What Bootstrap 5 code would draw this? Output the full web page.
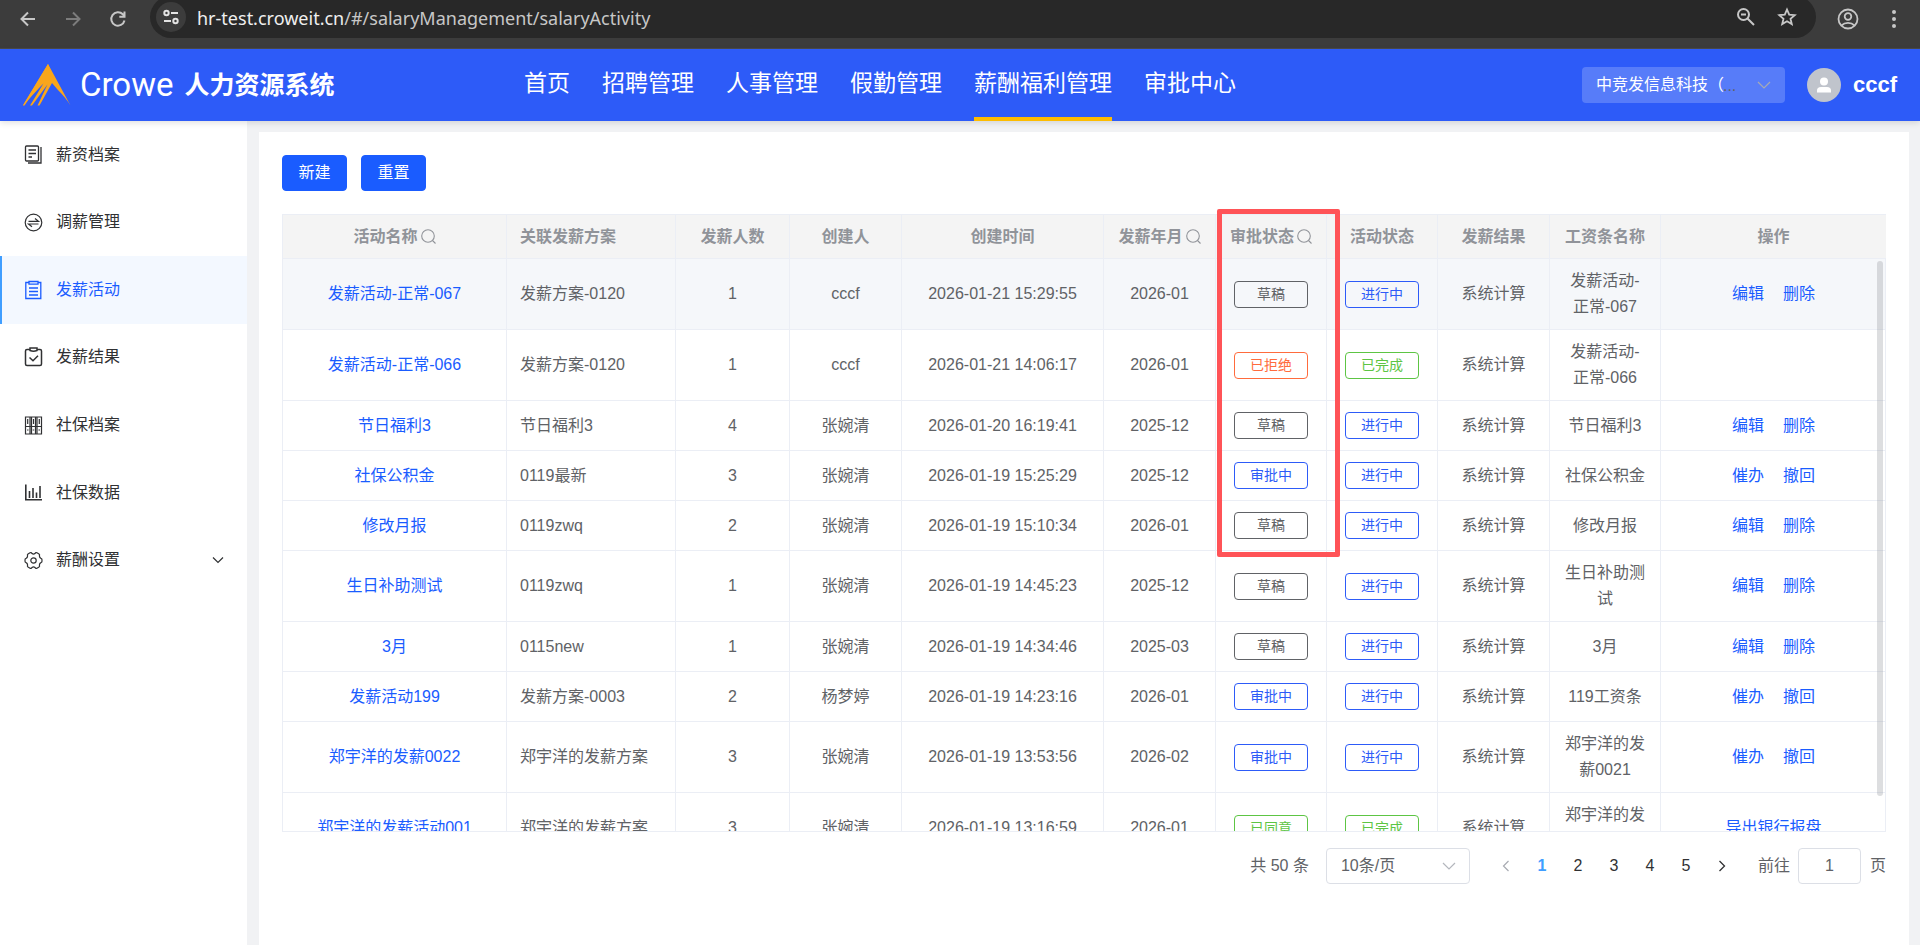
<!DOCTYPE html>
<html lang="zh-CN">
<head>
<meta charset="utf-8">
<meta name="viewport" content="width=device-width, initial-scale=1">
<title>人力资源系统 - 发薪活动</title>
<link rel="stylesheet" href="https://cdn.jsdelivr.net/npm/bootstrap@5.3.0/dist/css/bootstrap.min.css">
<script src="https://cdn.jsdelivr.net/npm/bootstrap@5.3.0/dist/js/bootstrap.bundle.min.js"></script>
<style>
  :root { --brand: #1a5cff; --bar: #2d5bf8; --ink: #606266; --line: #ebeef5; }
  body { font-family: "Liberation Sans", "Noto Sans CJK SC", sans-serif; font-size: 16px; line-height: 26px; color: var(--ink); background: #f1f2f4; min-height: 100vh; overflow: hidden; }
  svg { display: block; flex: none; }
  a { text-decoration: none; color: var(--brand); }

  /* browser toolbar */
  .chrome-bar { height: 49px; background: #3c3c3c; border-bottom: 1px solid #4a4a4a; color: #c7c7c7; padding: 0 16px 11px 17px; }
  .chrome-bar button, .icon-btn { background: none; border: 0; padding: 0; color: inherit; }
  .chrome-nav { width: 133px; gap: 23px; }
  .url-pill { background: #282828; height: 42px; margin-top: -4px; border-radius: 21px; padding: 1px 18px 0 6px; font: 18px/36px "Noto Sans", sans-serif; }
  .site-info { width: 30px; height: 30px; background: #3c3c3c !important; border-radius: 50%; }
  .url-text { margin-left: 11px; padding-top: 2px; }
  .url-host { color: #efefef; }

  /* application header */
  .app-head { height: 72px; background: var(--bar); color: #fff; padding: 0 22px; position: relative; box-shadow: 0 2px 6px rgba(0,0,0,.12); z-index: 2; }
  .brand-area { width: 502px; }
  .brand-word { font: 400 33px/40px Roboto, sans-serif; margin-left: 8px; }
  .brand-title { font-size: 25px; font-weight: 700; line-height: 36px; margin-left: 11px; }
  .top-menu { gap: 32px; height: 100%; }
  .top-menu a { color: #fff; font-size: 23px; line-height: 68px; border-bottom: 4px solid transparent; height: 72px; white-space: nowrap; }
  .top-menu a.on { border-color: #fdbc00; }
  .company { width: 203px; position: relative; }
  .company select { width: 100%; height: 36px; border: 0; border-radius: 4px; background: #577cf9; color: #fff; padding: 0 14px; appearance: none; line-height: 36px; }
  .company .more { position: absolute; left: 141px; top: 6px; color: #606266; }
  .company svg { position: absolute; right: 14px; top: 11px; color: #a8abb2; }
  .avatar { width: 34px; height: 34px; border-radius: 50%; background: #c0c4cc; margin: 0 12px 0 22px; }
  .user-name { font-size: 22px; font-weight: 700; color: #fff; margin-right: 1px; }

  /* side menu */
  .side { width: 247px; background: #fff; flex: none; }
  .side-list { display: grid; grid-template-rows: repeat(7, 1fr); height: 473px; margin: 0; padding: 0; list-style: none; }
  .side-list a { height: 100%; padding: 0 23px 0 22px; border-left: 2px solid transparent; color: #303133; gap: 13px; }
  .side-list a.on { background: #f3f8ff; border-color: #409eff; color: var(--brand); }

  .page-main { min-width: 0; padding: 11px 11px 0 12px; }
  .sheet { background: #fff; padding: 23px; flex: 1; }
  .tools { gap: 14px; }
  .btn-main { --bs-btn-bg: #1a5cff; --bs-btn-border-color: #1a5cff; --bs-btn-color: #fff; --bs-btn-hover-bg: #467cff; --bs-btn-hover-color: #fff; --bs-btn-font-size: 16px; --bs-btn-border-radius: 4px; --bs-btn-padding-y: 0; --bs-btn-padding-x: 0; width: 65px; height: 36px; }

  /* data grid */
  .grid-wrap { position: relative; margin-top: 23px; border: 1px solid var(--line); }
  .grid-body { position: relative; height: 572px; overflow: hidden; }
  .pay-grid { width: 100%; table-layout: fixed; border-collapse: separate; border-spacing: 0; text-align: center; }
  .pay-grid td, .pay-grid th { padding: 9px 13px; border-right: 1px solid var(--line); border-bottom: 1px solid var(--line); vertical-align: middle; }
  .pay-grid td { height: 50px; padding-top: 0; padding-bottom: 0; }
  .pay-grid tr.tall td { height: 71px; }
  .pay-grid th { height: 44px; background: #f4f4f4; color: #909399; font-weight: 700; white-space: nowrap; padding: 0 12px; }
  .pay-grid th:last-child, .pay-grid td:last-child { border-right: 0; }
  .pay-grid th:nth-child(2), .pay-grid td:nth-child(2) { text-align: left; padding-left: 13px; }
  .pay-grid tr.hovered td { background: #f5f7fa; }
  .pay-grid th svg { display: inline-block; margin-left: 3px; vertical-align: -2px; }
  .state { display: block; width: 74px; height: 27px; margin: 0 auto; border: 1px solid; border-radius: 4px; font-size: 14px; line-height: 24px; }
  .pay-grid td:nth-child(7), .pay-grid td:nth-child(8) { padding-left: 0; padding-right: 0; }
  .st-draft { color: #606266; } .st-run { color: #2d5bf8; } .st-no { color: #ff6b3d; } .st-ok { color: #5dc544; }
  .ops a + a { margin-left: 19px; }
  .thumb { position: absolute; right: 2px; top: 2px; width: 6px; height: 535px; border-radius: 3px; background: rgba(144,147,153,.3); }
  .callout { position: absolute; left: 58.3%; top: -6px; width: 123px; height: 348px; border: 5px solid #ff5357; border-radius: 2px; pointer-events: none; }

  /* pager */
  .pager { padding-top: 16px; }
  .pager select, .pager input { height: 36px; border: 1px solid #dcdfe6; border-radius: 4px; color: var(--ink); background: #fff; }
  .size-pick { position: relative; width: 144px; margin: 0 18px 0 17px; }
  .size-pick select { width: 100%; padding: 0 14px; appearance: none; }
  .size-pick svg { position: absolute; right: 14px; top: 11px; color: #b4b7bd; }
  .pager .icon-btn { width: 36px; height: 36px; color: #303133; }
  .pager .icon-btn.on { color: #409eff; font-weight: 700; }
  .pager label { margin-left: 18px; }
  .pager input { width: 63px; text-align: center; padding: 0; margin: 0 9px 0 8px; }
</style>
</head>
<body class="d-flex flex-column">

<div class="chrome-bar d-flex align-items-center">
  <div class="chrome-nav d-flex align-items-center">
    <button aria-label="后退"><svg width="22" height="22" viewBox="0 0 22 22" fill="none" stroke="currentColor" stroke-width="2"><path d="M18 11H5M11 4.500 4.500 11l6.500 6.500"/></svg></button>
    <button aria-label="前进"><svg width="22" height="22" viewBox="0 0 22 22" fill="none" stroke="#7c7c7c" stroke-width="2"><path d="M4 11h13M11 4.500 17.500 11 11 17.500"/></svg></button>
    <button aria-label="刷新"><svg width="22" height="22" viewBox="0 0 22 22" fill="none" stroke="currentColor" stroke-width="2"><path d="M17.500 12.500a6.700 6.700 0 1 1-1.700-6.200L18 8.500M17.500 3.500v5.200h-5.200"/></svg></button>
  </div>
  <div class="url-pill d-flex align-items-center flex-grow-1">
    <button class="site-info d-flex align-items-center justify-content-center" aria-label="网站信息"><svg width="18" height="18" viewBox="0 0 18 18" fill="none" stroke="#e3e3e3" stroke-width="2"><circle cx="4.500" cy="5" r="2.200"/><path d="M9 5h7M2 13h7"/><circle cx="13.500" cy="13" r="2.200"/></svg></button>
    <div class="url-text flex-grow-1"><span class="url-host">hr-test.croweit.cn</span>/#/salaryManagement/salaryActivity</div>
    <button class="me-3 pe-1" aria-label="缩放"><svg width="20" height="20" viewBox="0 0 20 20" fill="none" stroke="currentColor" stroke-width="2"><circle cx="7.500" cy="7.500" r="5.500"/><path d="M5 7.500h5M11.500 11.500 18 18"/></svg></button>
    <button aria-label="收藏"><svg width="22" height="22" viewBox="0 0 22 22" fill="none" stroke="currentColor" stroke-width="1.800"><path d="m11 3.500 2.200 5.100 5.500.5-4.200 3.600 1.300 5.400-4.800-2.900-4.800 2.900 1.300-5.400-4.200-3.600 5.500-.5z"/></svg></button>
  </div>
  <button class="ms-3 ps-1" aria-label="用户"><svg width="24" height="24" viewBox="0 0 24 24" fill="none" stroke="currentColor" stroke-width="1.800"><circle cx="12" cy="12" r="9.500"/><circle cx="12" cy="9.500" r="3.300"/><path d="M5.500 18.500c3.500-3.500 9.500-3.500 13 0"/></svg></button>
  <button class="ms-4" aria-label="菜单"><svg width="20" height="22" viewBox="0 0 20 22" fill="currentColor"><circle cx="10" cy="4" r="2"/><circle cx="10" cy="11" r="2"/><circle cx="10" cy="18" r="2"/></svg></button>
</div>

<header class="app-head d-flex align-items-center">
  <div class="brand-area d-flex align-items-center">
    <svg width="50" height="44" viewBox="0 0 50 44" fill="#f9a61c"><path d="M26 1 48.500 42.500Q44 35 35.500 26.500L30 20 17.500 42.500H15.500L25.500 21.500 10 42.500H8L21.500 20.500Q12 28 2.500 42.500H.8z"/><path d="M26 1 36 26 29 14 26 18 29 12 1 42.500z"/></svg>
    <span class="brand-word">Crowe</span>
    <span class="brand-title">人力资源系统</span>
  </div>
  <nav class="top-menu d-flex">
    <a href="#">首页</a><a href="#">招聘管理</a><a href="#">人事管理</a><a href="#">假勤管理</a><a href="#" class="on">薪酬福利管理</a><a href="#">审批中心</a>
  </nav>
  <div class="company ms-auto">
    <select aria-label="公司"><option>中竞发信息科技（</option></select>
    <span class="more" aria-hidden="true">...</span>
    <svg width="14" height="14" viewBox="0 0 14 14" fill="none" stroke="currentColor" stroke-width="1.200"><path d="m1 4 6 6 6-6"/></svg>
  </div>
  <span class="avatar d-flex align-items-center justify-content-center"><svg width="16" height="16" viewBox="0 0 16 16" fill="#fff"><circle cx="8" cy="4.500" r="4"/><path d="M1 15.500v-2Q1 10 5 10h6q4 0 4 3.500v2z"/></svg></span>
  <span class="user-name">cccf</span>
</header>

<div class="d-flex flex-grow-1">
  <aside class="side">
    <ul class="side-list">
      <li><a href="#" class="d-flex align-items-center"><svg width="19" height="19" viewBox="0 0 19 19" fill="none" stroke="currentColor" stroke-width="1.300"><rect x="1.500" y="1" width="13" height="15" rx="1"/><path d="M17 2v16H4M4.500 5h7.500M4.500 8.500h7.500M4.500 12H8" /></svg>薪资档案</a></li>
      <li><a href="#" class="d-flex align-items-center"><svg width="19" height="19" viewBox="0 0 19 19" fill="none" stroke="currentColor" stroke-width="1.200"><circle cx="9.500" cy="9.500" r="8.300"/><path d="M4.500 8.300h10L11 5.500M14.500 11h-10L8 13.800"/></svg>调薪管理</a></li>
      <li><a href="#" class="on d-flex align-items-center"><svg width="19" height="20" viewBox="0 0 19 20" fill="none" stroke="currentColor" stroke-width="1.300"><path d="M5 2.500H1.800v16h15v-16H14M5 1.500h9v2.700H5zM5 8h9M5 11.500h9M5 15h9"/></svg>发薪活动</a></li>
      <li><a href="#" class="d-flex align-items-center"><svg width="19" height="20" viewBox="0 0 19 20" fill="none" stroke="currentColor" stroke-width="1.500"><path d="M6 2.500H3Q1.500 2.500 1.500 4v13q0 1.500 1.500 1.500h13q1.500 0 1.500-1.500V4q0-1.500-1.500-1.500h-3M6 1h7v2.500Q9.500 5 6 3.500zM5.500 10.500l3.500 3.300 5-5"/></svg>发薪结果</a></li>
      <li><a href="#" class="d-flex align-items-center"><svg width="19" height="19" viewBox="0 0 19 19" fill="none" stroke="currentColor" stroke-width="1.200"><path d="M1.500 1h16v17h-16zM6 1v17M7.500 1v17M11.500 1v17M13 1v17M1.500 10.500h16M3.700 3v5M9.500 3v5M15.300 3v5M3 14h1.500M8.700 14h1.500M14.500 14H16"/></svg>社保档案</a></li>
      <li><a href="#" class="d-flex align-items-center"><svg width="19" height="19" viewBox="0 0 19 19" fill="none" stroke="currentColor" stroke-width="1.600"><path d="M1.800 1.500v15.200H18M5.500 15V8M9 15V5M12.500 15V9.500M16 15V3"/></svg>社保数据</a></li>
      <li><a href="#" class="d-flex align-items-center"><svg width="19" height="19" viewBox="0 0 19 19" fill="none" stroke="currentColor" stroke-width="1.200"><path d="M6 1.800q1.500-.5 2 .7 1.500 1.300 3 0 .5-1.200 2-.7l2 1.200q1 .8.400 1.900.1 2.100 1.600 2.500Q18.300 7.700 18 9.500q.3 1.800-1 2.100-1.500.4-1.600 2.500.6 1.100-.4 1.900l-2 1.200q-1.500.5-2-.7-1.500-1.300-3 0-.5 1.200-2 .7L4 16q-1-.8-.4-1.900-.1-2.100-1.600-2.500Q.7 11.300 1 9.500.7 7.700 2 7.400q1.500-.4 1.600-2.500Q3 3.800 4 3z"/><circle cx="9.500" cy="9.500" r="2.700"/></svg>薪酬设置<svg class="ms-auto" width="12" height="12" viewBox="0 0 12 12" fill="none" stroke="currentColor" stroke-width="1.200"><path d="m1 3.500 5 5 5-5"/></svg></a></li>
    </ul>
  </aside>

  <main class="page-main flex-grow-1 d-flex flex-column">
    <section class="sheet">
      <div class="tools d-flex">
        <button type="button" class="btn btn-main">新建</button>
        <button type="button" class="btn btn-main">重置</button>
      </div>

      <div class="grid-wrap">
        <table class="pay-grid">
          <colgroup><col style="width:224px"><col style="width:169px"><col style="width:114px"><col style="width:112px"><col style="width:202px"><col style="width:112px"><col style="width:111px"><col style="width:111px"><col style="width:112px"><col style="width:111px"><col style="width:225px"></colgroup>
          <thead><tr>
            <th>活动名称<svg width="15" height="15" viewBox="0 0 15 15" fill="none" stroke="currentColor" stroke-width="1.100"><circle cx="7" cy="7" r="6.300"/><path d="m11.500 11.500 3 3"/></svg></th>
            <th>关联发薪方案</th><th>发薪人数</th><th>创建人</th><th>创建时间</th>
            <th>发薪年月<svg width="15" height="15" viewBox="0 0 15 15" fill="none" stroke="currentColor" stroke-width="1.100"><circle cx="7" cy="7" r="6.300"/><path d="m11.500 11.500 3 3"/></svg></th>
            <th>审批状态<svg width="15" height="15" viewBox="0 0 15 15" fill="none" stroke="currentColor" stroke-width="1.100"><circle cx="7" cy="7" r="6.300"/><path d="m11.500 11.500 3 3"/></svg></th>
            <th>活动状态</th><th>发薪结果</th><th>工资条名称</th><th>操作</th>
          </tr></thead>
        </table>
        <div class="grid-body">
          <table class="pay-grid">
            <colgroup><col style="width:224px"><col style="width:169px"><col style="width:114px"><col style="width:112px"><col style="width:202px"><col style="width:112px"><col style="width:111px"><col style="width:111px"><col style="width:112px"><col style="width:111px"><col style="width:225px"></colgroup>
            <tbody>
              <tr class="tall hovered"><td><a href="#">发薪活动-正常-067</a></td><td>发薪方案-0120</td><td>1</td><td>cccf</td><td>2026-01-21 15:29:55</td><td>2026-01</td><td><span class="state st-draft">草稿</span></td><td><span class="state st-run">进行中</span></td><td>系统计算</td><td>发薪活动-<br>正常-067</td><td class="ops"><a href="#">编辑</a><a href="#">删除</a></td></tr>
              <tr class="tall"><td><a href="#">发薪活动-正常-066</a></td><td>发薪方案-0120</td><td>1</td><td>cccf</td><td>2026-01-21 14:06:17</td><td>2026-01</td><td><span class="state st-no">已拒绝</span></td><td><span class="state st-ok">已完成</span></td><td>系统计算</td><td>发薪活动-<br>正常-066</td><td class="ops"></td></tr>
              <tr><td><a href="#">节日福利3</a></td><td>节日福利3</td><td>4</td><td>张婉清</td><td>2026-01-20 16:19:41</td><td>2025-12</td><td><span class="state st-draft">草稿</span></td><td><span class="state st-run">进行中</span></td><td>系统计算</td><td>节日福利3</td><td class="ops"><a href="#">编辑</a><a href="#">删除</a></td></tr>
              <tr><td><a href="#">社保公积金</a></td><td>0119最新</td><td>3</td><td>张婉清</td><td>2026-01-19 15:25:29</td><td>2025-12</td><td><span class="state st-run">审批中</span></td><td><span class="state st-run">进行中</span></td><td>系统计算</td><td>社保公积金</td><td class="ops"><a href="#">催办</a><a href="#">撤回</a></td></tr>
              <tr><td><a href="#">修改月报</a></td><td>0119zwq</td><td>2</td><td>张婉清</td><td>2026-01-19 15:10:34</td><td>2026-01</td><td><span class="state st-draft">草稿</span></td><td><span class="state st-run">进行中</span></td><td>系统计算</td><td>修改月报</td><td class="ops"><a href="#">编辑</a><a href="#">删除</a></td></tr>
              <tr class="tall"><td><a href="#">生日补助测试</a></td><td>0119zwq</td><td>1</td><td>张婉清</td><td>2026-01-19 14:45:23</td><td>2025-12</td><td><span class="state st-draft">草稿</span></td><td><span class="state st-run">进行中</span></td><td>系统计算</td><td>生日补助测试</td><td class="ops"><a href="#">编辑</a><a href="#">删除</a></td></tr>
              <tr><td><a href="#">3月</a></td><td>0115new</td><td>1</td><td>张婉清</td><td>2026-01-19 14:34:46</td><td>2025-03</td><td><span class="state st-draft">草稿</span></td><td><span class="state st-run">进行中</span></td><td>系统计算</td><td>3月</td><td class="ops"><a href="#">编辑</a><a href="#">删除</a></td></tr>
              <tr><td><a href="#">发薪活动199</a></td><td>发薪方案-0003</td><td>2</td><td>杨梦婷</td><td>2026-01-19 14:23:16</td><td>2026-01</td><td><span class="state st-run">审批中</span></td><td><span class="state st-run">进行中</span></td><td>系统计算</td><td>119工资条</td><td class="ops"><a href="#">催办</a><a href="#">撤回</a></td></tr>
              <tr class="tall"><td><a href="#">郑宇洋的发薪0022</a></td><td>郑宇洋的发薪方案</td><td>3</td><td>张婉清</td><td>2026-01-19 13:53:56</td><td>2026-02</td><td><span class="state st-run">审批中</span></td><td><span class="state st-run">进行中</span></td><td>系统计算</td><td>郑宇洋的发薪0021</td><td class="ops"><a href="#">催办</a><a href="#">撤回</a></td></tr>
              <tr class="tall"><td><a href="#">郑宇洋的发薪活动001</a></td><td>郑宇洋的发薪方案</td><td>3</td><td>张婉清</td><td>2026-01-19 13:16:59</td><td>2026-01</td><td><span class="state st-ok">已同意</span></td><td><span class="state st-ok">已完成</span></td><td>系统计算</td><td>郑宇洋的发薪001</td><td class="ops"><a href="#">导出银行报盘</a></td></tr>
            </tbody>
          </table>
          <div class="thumb"></div>
        </div>
        <div class="callout"></div>
      </div>

      <div class="pager d-flex align-items-center justify-content-end">
        <span>共 50 条</span>
        <div class="size-pick">
          <select aria-label="每页条数"><option>10条/页</option></select>
          <svg width="14" height="14" viewBox="0 0 14 14" fill="none" stroke="currentColor" stroke-width="1.200"><path d="m1 4 6 6 6-6"/></svg>
        </div>
        <button class="icon-btn d-flex align-items-center justify-content-center" aria-label="上一页"><svg width="12" height="12" viewBox="0 0 12 12" fill="none" stroke="#a8abb2" stroke-width="1.200"><path d="M8.500 1 3.500 6l5 5"/></svg></button>
        <button class="icon-btn on">1</button><button class="icon-btn">2</button><button class="icon-btn">3</button><button class="icon-btn">4</button><button class="icon-btn">5</button>
        <button class="icon-btn d-flex align-items-center justify-content-center" aria-label="下一页"><svg width="12" height="12" viewBox="0 0 12 12" fill="none" stroke="currentColor" stroke-width="1.300"><path d="m3.500 1 5 5-5 5"/></svg></button>
        <label for="jump">前往</label>
        <input id="jump" type="text" value="1">
        <span>页</span>
      </div>
    </section>
  </main>
</div>
</body>
</html>
